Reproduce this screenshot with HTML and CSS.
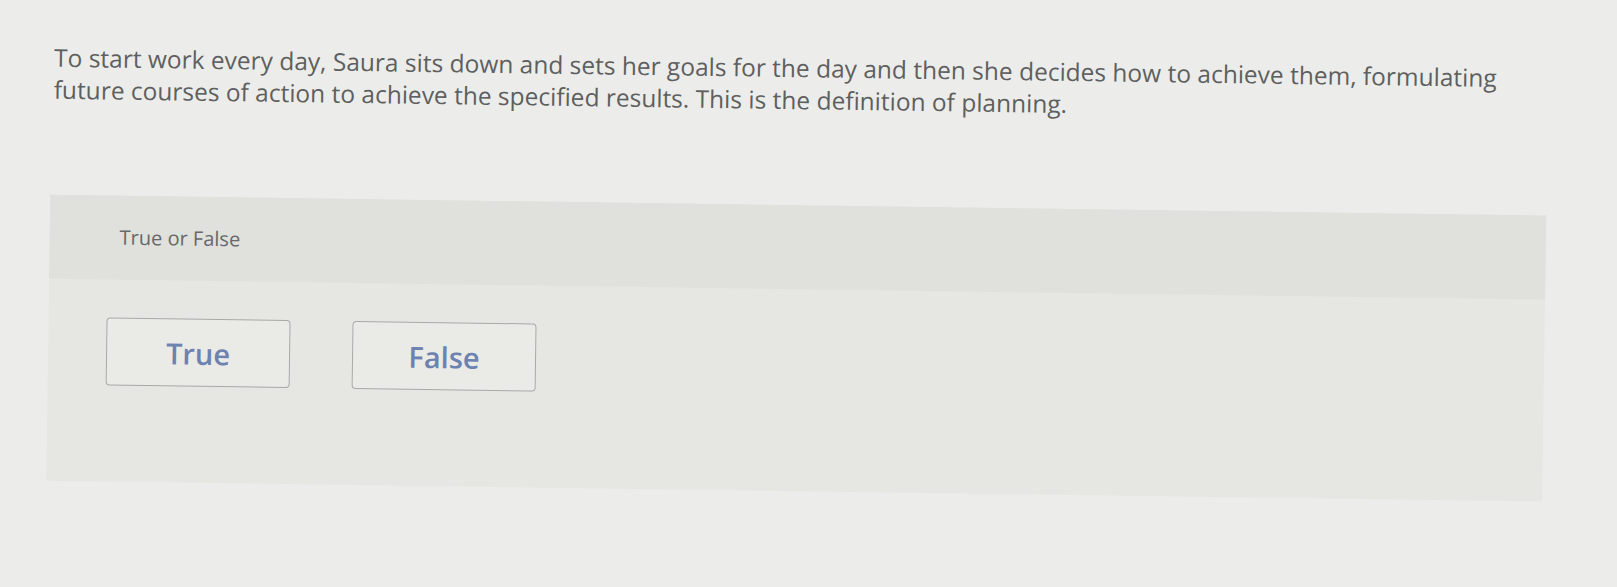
FILE: index.html
```html
<!DOCTYPE html>
<html>
<head>
<meta charset="utf-8">
<link rel="stylesheet" href="styles.css">
</head>
<body>
<div class="page">
  <p class="question">To start work every day, Saura sits down and sets her goals for the day and then she decides how to achieve them, formulating future courses of action to achieve the specified results. This is the definition of planning.</p>
  <div class="card">
    <div class="card-head">True or False</div>
    <div class="card-body">
      <button class="choice">True</button>
      <button class="choice">False</button>
    </div>
  </div>
</div>
</body>
</html>
```
FILE: styles.css
```css
html {
  overflow: hidden;
  background: #ecedea;
}
body {
  margin: 0;
  padding: 0;
  min-height: 587px;
  background: #ecedea;
}
.page {
  padding: 41px 0 0 53px;
  width: 1496px;
  font-family: "Open Sans", Lato, sans-serif;
  transform: rotate(0.8deg);
  transform-origin: 0 0;
}
.question {
  margin: 0 0 0 2px;
  font-size: 24.5px;
  line-height: 32px;
  color: #5e5f60;
  width: 1475px;
}
.card {
  margin-top: 89px;
  background: #e6e6e2;
  height: 286px;
}
.card-head {
  background: #e0e0dc;
  height: 84px;
  padding: 28px 0 0 70px;
  box-sizing: border-box;
  font-size: 20px;
  color: #676869;
}
.card-body {
  display: flex;
  gap: 62px;
  padding: 38px 0 0 58px;
}
.choice {
  display: flex;
  align-items: center;
  justify-content: center;
  width: 184px;
  height: 68px;
  background: #eaeae7;
  border: 1.5px solid #a9aaa8;
  border-radius: 4px;
  font-family: "Open Sans", Lato, sans-serif;
  font-weight: 600;
  font-size: 29px;
  color: #6e82b0;
  padding: 0;
}
```
